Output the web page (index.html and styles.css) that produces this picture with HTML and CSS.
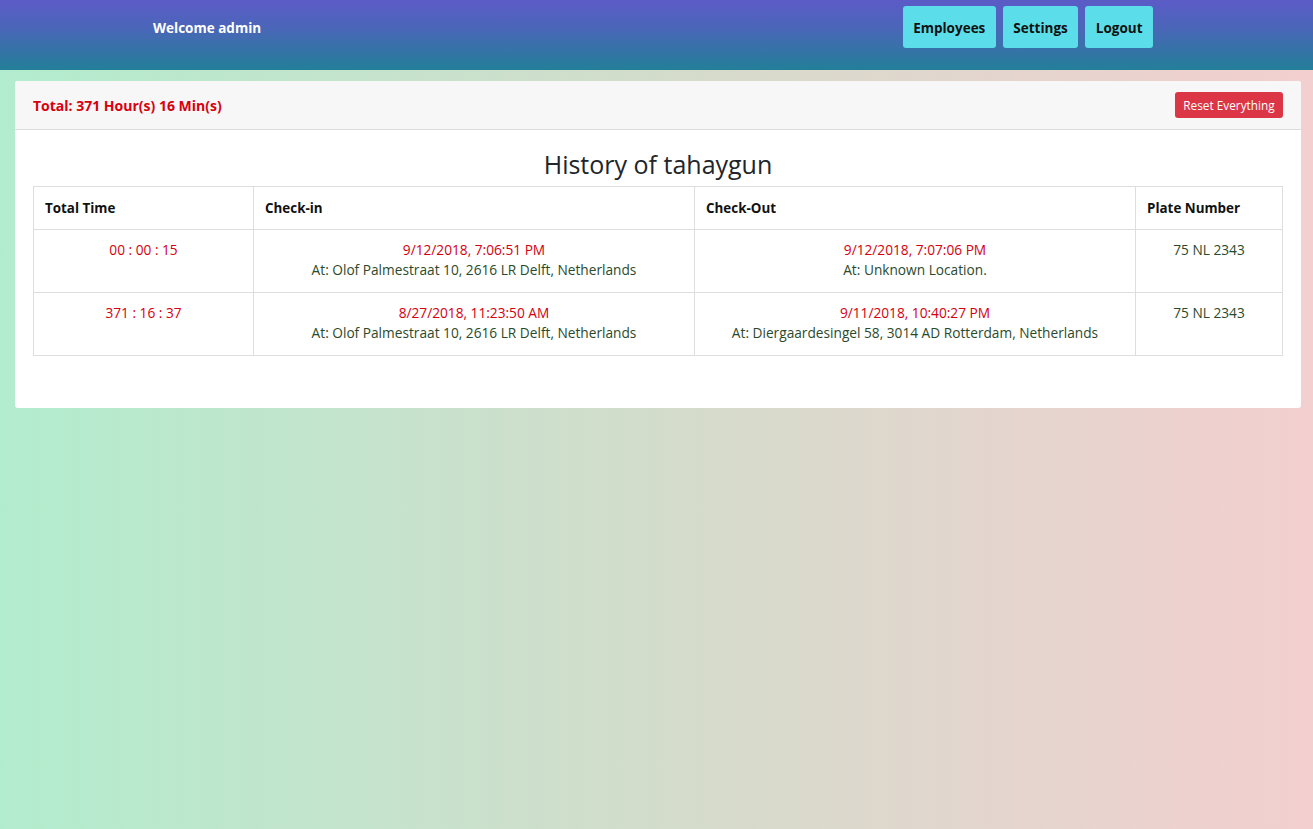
FILE: index.html
```html
<!DOCTYPE html>
<html>
<head>
<meta charset="utf-8">
<link rel="stylesheet" href="styles.css">
</head>
<body>
<nav class="topbar">
  <div class="welcome">Welcome admin</div>
  <div class="nav-buttons">
    <a class="nav-btn">Employees</a>
    <a class="nav-btn">Settings</a>
    <a class="nav-btn">Logout</a>
  </div>
</nav>
<main class="card">
  <div class="card-header">
    <span class="total">Total: 371 Hour(s) 16 Min(s)</span>
    <button class="reset-btn">Reset Everything</button>
  </div>
  <div class="card-body">
    <h3 class="title">History of tahaygun</h3>
    <table class="history">
      <colgroup>
        <col class="c1"><col class="c2"><col class="c3"><col class="c4">
      </colgroup>
      <thead>
        <tr><th>Total Time</th><th>Check-in</th><th>Check-Out</th><th>Plate Number</th></tr>
      </thead>
      <tbody>
        <tr>
          <td class="red">00 : 00 : 15</td>
          <td><div class="red">9/12/2018, 7:06:51 PM</div><div class="loc">At: Olof Palmestraat 10, 2616 LR Delft, Netherlands</div></td>
          <td><div class="red">9/12/2018, 7:07:06 PM</div><div class="loc">At: Unknown Location.</div></td>
          <td class="loc">75 NL 2343</td>
        </tr>
        <tr>
          <td class="red">371 : 16 : 37</td>
          <td><div class="red">8/27/2018, 11:23:50 AM</div><div class="loc">At: Olof Palmestraat 10, 2616 LR Delft, Netherlands</div></td>
          <td><div class="red">9/11/2018, 10:40:27 PM</div><div class="loc">At: Diergaardesingel 58, 3014 AD Rotterdam, Netherlands</div></td>
          <td class="loc">75 NL 2343</td>
        </tr>
      </tbody>
    </table>
  </div>
</main>
</body>
</html>
```
FILE: styles.css
```css
* { box-sizing: border-box; }
html, body { height: 100%; }
body {
  margin: 0;
  font-family: "Open Sans", "Noto Sans", sans-serif;
  font-size: 13.7px;
  color: #212529;
  background: linear-gradient(to right, #b2ecce 0%, #d3dccb 50%, #f3cfd0 100%);
  min-height: 829px;
}
.topbar {
  height: 70px;
  background: linear-gradient(to bottom, #5c5bc7 0%, #4a66b8 40%, #237f98 100%);
  display: flex;
  align-items: flex-start;
  padding: 0 160px 0 153px;
}
.welcome {
  color: #fff;
  font-weight: 700;
  font-size: 13.5px;
  line-height: 56px;
}
.nav-buttons {
  margin-left: auto;
  display: flex;
  gap: 7px;
  padding-top: 6px;
}
.nav-btn {
  display: block;
  height: 42px;
  line-height: 44px;
  padding: 0 10.5px;
  background: #5bdeea;
  color: #111;
  font-weight: 700;
  font-size: 13.5px;
  border-radius: 3px;
}
.card {
  display: block;
  margin: 11px 12px 0 15px;
  background: #fff;
  border-radius: 3px;
  overflow: hidden;
}
.card-header {
  display: flex;
  justify-content: space-between;
  align-items: center;
  padding: 11px 18px;
  background: #f7f7f7;
  border-bottom: 1px solid #dcdcdc;
}
.total {
  color: #d9000d;
  font-weight: 700;
  font-size: 14px;
}
.reset-btn {
  height: 26px;
  width: 108px;
  padding: 0;
  border: none;
  border-radius: 3px;
  background: #dc3545;
  color: #fff;
  font-family: "Open Sans", sans-serif;
  font-size: 11.8px;
}
.card-body {
  padding: 17px 18px 52px;
}
.title {
  margin: 0 0 4px;
  text-align: center;
  font-weight: 400;
  font-size: 25px;
  line-height: 35px;
  color: #212529;
}
.history {
  width: 100%;
  border-collapse: collapse;
  table-layout: fixed;
}
.c1 { width: 220px; }
.c2 { width: 441px; }
.c3 { width: 441px; }
.c4 { width: 147px; }
.history th, .history td {
  border: 1px solid #dedede;
  vertical-align: top;
}
.history th {
  text-align: left;
  font-weight: 700;
  font-size: 13.4px;
  padding: 12px 11px 12px;
  line-height: 18px;
  color: #111;
}
.history td {
  text-align: center;
  padding: 10px 12px 12px;
  line-height: 20px;
}
.red { color: #d4000f; }
.loc { color: #2b4a2b; }
```
